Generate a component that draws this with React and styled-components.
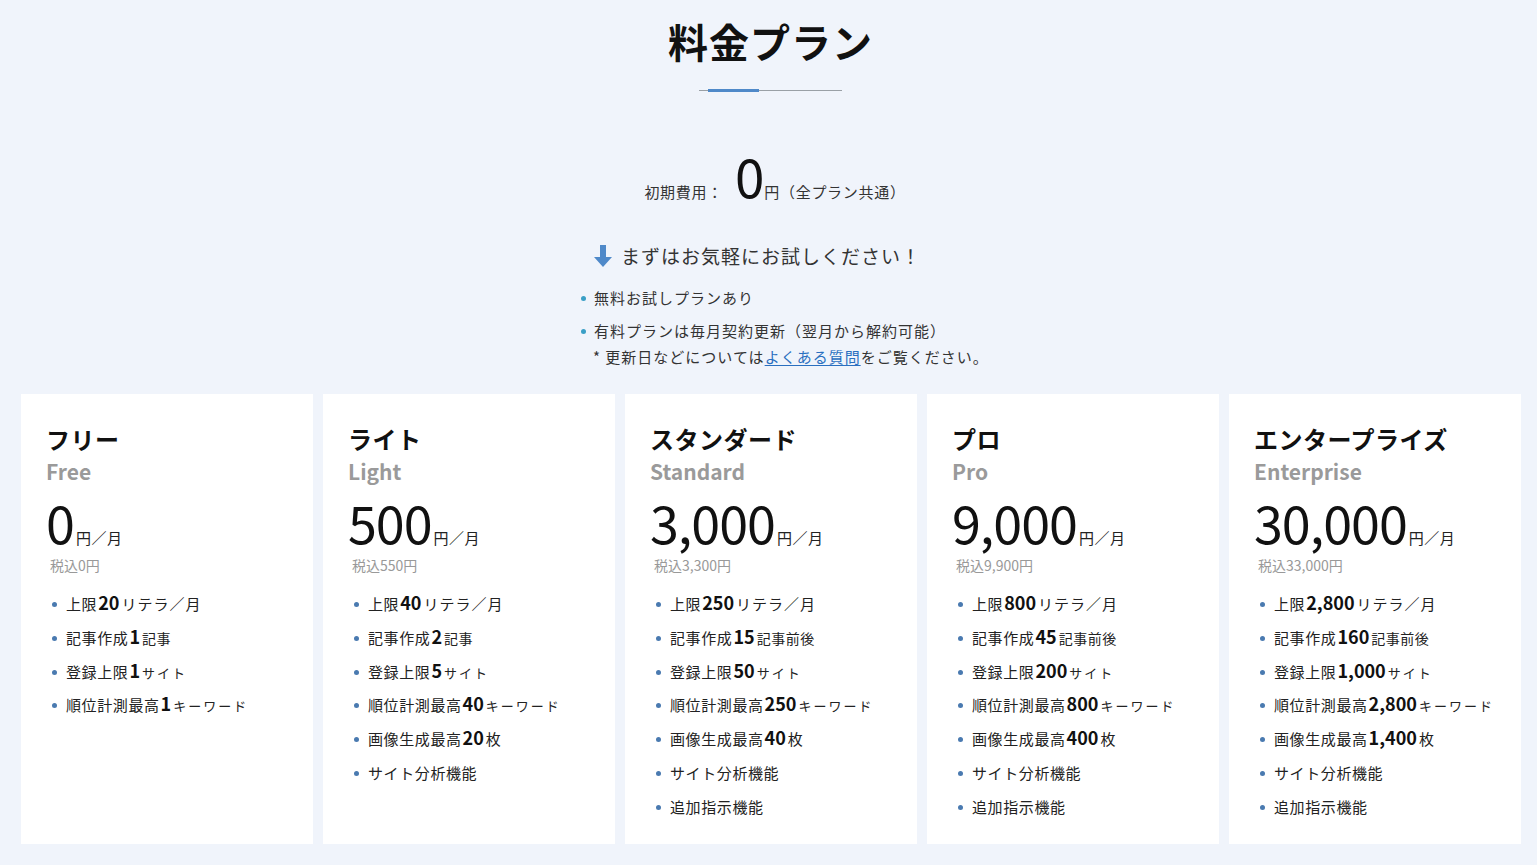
import React from "react";
import styled, { createGlobalStyle } from "styled-components";

const GlobalStyle = createGlobalStyle`
  html, body { margin: 0; padding: 0; }
  body {
    background: #f0f4fb;
    font-family: "Noto Sans CJK JP", "Noto Sans", sans-serif;
    color: #222;
  }
`;

const Page = styled.div`
  width: 1537px;
  min-height: 865px;
  background: #f0f4fb;
  display: flex;
  flex-direction: column;
`;

const Header = styled.header`
  display: flex;
  flex-direction: column;
  align-items: center;
  padding-top: 17px;
  padding-left: 4px;
`;

const Title = styled.h1`
  margin: 0;
  font-size: 40px;
  line-height: 48px;
  font-weight: 700;
  letter-spacing: 1px;
  color: #111;
`;

const Divider = styled.div`
  position: relative;
  width: 143px;
  height: 1px;
  background: #9aa0a6;
  margin-top: 25px;
  &::before {
    content: "";
    position: absolute;
    left: 9px;
    top: -1px;
    width: 51px;
    height: 3px;
    background: #4f89c9;
  }
`;

const InitialFee = styled.div`
  display: flex;
  align-items: baseline;
  margin-top: 57px;
  margin-left: 9px;
  font-size: 15px;
  letter-spacing: 0.7px;
  color: #333;
`;

const FeeLabel = styled.span`
  margin-right: 12px;
`;

const FeeNumber = styled.span`
  font-size: 53px;
  line-height: 54px;
  color: #111;
  letter-spacing: 0;
`;

const TryRow = styled.div`
  display: flex;
  align-items: center;
  gap: 9px;
  margin-top: 40px;
  margin-left: -26px;
  font-size: 19px;
  letter-spacing: 1px;
  color: #333;
`;

const NoteBlock = styled.div`
  align-self: flex-start;
  margin-left: 574px;
  margin-top: 18px;
  display: flex;
  flex-direction: column;
  font-size: 15px;
  letter-spacing: 1px;
  color: #333;
`;

const NoteItem = styled.div`
  position: relative;
  padding-left: 16px;
  line-height: 22px;
  margin-bottom: ${(p) => p.$gap || 0}px;
  &::before {
    content: "";
    position: absolute;
    left: 3px;
    top: 9px;
    width: 5px;
    height: 5px;
    border-radius: 50%;
    background: #3a9fc6;
  }
`;

const NoteSub = styled.div`
  padding-left: 15px;
  line-height: 22px;
  margin-top: 4px;
`;

const FaqLink = styled.a`
  color: #2a6fc0;
  text-decoration: underline;
  text-underline-offset: 2px;
`;

const Cards = styled.section`
  display: flex;
  gap: 10px;
  padding: 0 16px 0 21px;
  margin-top: 26px;
`;

const Card = styled.article`
  width: 292px;
  height: 450px;
  box-sizing: border-box;
  background: #fff;
  padding: 28px 20px 0 25px;
  display: flex;
  flex-direction: column;
`;

const PlanName = styled.h2`
  margin: 0;
  font-size: 24px;
  line-height: 34px;
  font-weight: 700;
  letter-spacing: 0.5px;
  color: #111;
`;

const PlanEn = styled.div`
  font-size: 21px;
  line-height: 28px;
  font-weight: 700;
  color: #9a9a9a;
  margin-top: 1px;
`;

const PriceRow = styled.div`
  display: flex;
  align-items: baseline;
  margin-top: 10px;
  height: 54px;
`;

const Price = styled.span`
  font-size: 52px;
  line-height: 54px;
  color: #111;
  letter-spacing: -1px;
`;

const PriceUnit = styled.span`
  font-size: 15px;
  line-height: 1;
  color: #222;
  margin-left: 2px;
  letter-spacing: 0.5px;
`;

const TaxNote = styled.div`
  font-size: 14px;
  line-height: 18px;
  color: #999;
  margin-left: 4px;
  margin-top: 7px;
`;

const FeatureList = styled.ul`
  list-style: none;
  margin: 17px 0 0 0;
  padding: 0;
  display: flex;
  flex-direction: column;
  gap: 8.8px;
`;

const Feature = styled.li`
  position: relative;
  padding-left: 20px;
  height: 25px;
  font-size: 15px;
  line-height: 25px;
  letter-spacing: 0.6px;
  color: #222;
  white-space: nowrap;
  &::before {
    content: "";
    position: absolute;
    left: 6px;
    top: 11px;
    width: 5px;
    height: 5px;
    border-radius: 50%;
    background: #4a7ab0;
  }
`;

const Num = styled.b`
  font-size: 18px;
  line-height: 1;
  font-weight: 700;
  color: #111;
  margin: 0 2px 0 1px;
  letter-spacing: 0;
`;

const Suffix = styled.span`
  font-size: ${(p) => p.$size || 14}px;
  letter-spacing: ${(p) => p.$spacing || 0.5}px;
`;

const ArrowIcon = () => (
  <svg width="18" height="22" viewBox="0 0 18 22">
    <path d="M6 0h6v12h6L9 22 0 12h6z" fill="#4f89c9" />
  </svg>
);

const plans = [
  {
    ja: "フリー",
    en: "Free",
    price: "0",
    tax: "税込0円",
    features: [
      ["上限", "20", "リテラ／月", 15, 1],
      ["記事作成", "1", "記事", 14, 0.5],
      ["登録上限", "1", "サイト", 13, 2],
      ["順位計測最高", "1", "キーワード", 13, 2],
    ],
  },
  {
    ja: "ライト",
    en: "Light",
    price: "500",
    tax: "税込550円",
    features: [
      ["上限", "40", "リテラ／月", 15, 1],
      ["記事作成", "2", "記事", 14, 0.5],
      ["登録上限", "5", "サイト", 13, 2],
      ["順位計測最高", "40", "キーワード", 13, 2],
      ["画像生成最高", "20", "枚", 15, 0.5],
      ["サイト分析機能"],
    ],
  },
  {
    ja: "スタンダード",
    en: "Standard",
    price: "3,000",
    tax: "税込3,300円",
    features: [
      ["上限", "250", "リテラ／月", 15, 1],
      ["記事作成", "15", "記事前後", 14, 0],
      ["登録上限", "50", "サイト", 13, 2],
      ["順位計測最高", "250", "キーワード", 13, 2],
      ["画像生成最高", "40", "枚", 15, 0.5],
      ["サイト分析機能"],
      ["追加指示機能"],
    ],
  },
  {
    ja: "プロ",
    en: "Pro",
    price: "9,000",
    tax: "税込9,900円",
    features: [
      ["上限", "800", "リテラ／月", 15, 1],
      ["記事作成", "45", "記事前後", 14, 0],
      ["登録上限", "200", "サイト", 13, 2],
      ["順位計測最高", "800", "キーワード", 13, 2],
      ["画像生成最高", "400", "枚", 15, 0.5],
      ["サイト分析機能"],
      ["追加指示機能"],
    ],
  },
  {
    ja: "エンタープライズ",
    en: "Enterprise",
    price: "30,000",
    tax: "税込33,000円",
    features: [
      ["上限", "2,800", "リテラ／月", 15, 1],
      ["記事作成", "160", "記事前後", 14, 0],
      ["登録上限", "1,000", "サイト", 13, 2],
      ["順位計測最高", "2,800", "キーワード", 13, 2],
      ["画像生成最高", "1,400", "枚", 15, 0.5],
      ["サイト分析機能"],
      ["追加指示機能"],
    ],
  },
];

export default function App() {
  return (
    <Page>
      <GlobalStyle />
      <Header>
        <Title>料金プラン</Title>
        <Divider />
        <InitialFee>
          <FeeLabel>初期費用：</FeeLabel>
          <FeeNumber>0</FeeNumber>
          <span>円（全プラン共通）</span>
        </InitialFee>
        <TryRow>
          <ArrowIcon />
          <span>まずはお気軽にお試しください！</span>
        </TryRow>
        <NoteBlock>
          <NoteItem $gap={11}>無料お試しプランあり</NoteItem>
          <NoteItem>有料プランは毎月契約更新（翌月から解約可能）</NoteItem>
          <NoteSub>
            * 更新日などについては<FaqLink href="#">よくある質問</FaqLink>をご覧ください。
          </NoteSub>
        </NoteBlock>
      </Header>
      <Cards>
        {plans.map((p) => (
          <Card key={p.en}>
            <PlanName>{p.ja}</PlanName>
            <PlanEn>{p.en}</PlanEn>
            <PriceRow>
              <Price>{p.price}</Price>
              <PriceUnit>円／月</PriceUnit>
            </PriceRow>
            <TaxNote>{p.tax}</TaxNote>
            <FeatureList>
              {p.features.map(([pre, num, suf, size, sp]) => (
                <Feature key={pre + (num || "")}>
                  {pre}
                  {num && <Num>{num}</Num>}
                  {suf && (
                    <Suffix $size={size} $spacing={sp}>
                      {suf}
                    </Suffix>
                  )}
                </Feature>
              ))}
            </FeatureList>
          </Card>
        ))}
      </Cards>
    </Page>
  );
}
